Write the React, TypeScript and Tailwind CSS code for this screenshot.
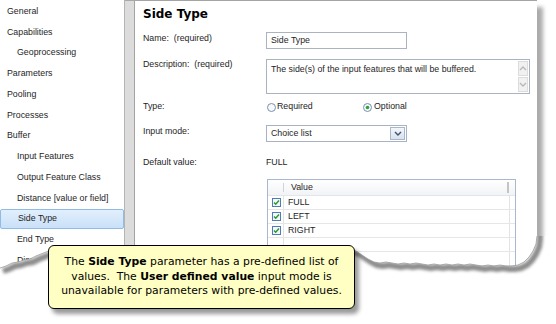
import React from 'react';

const navItems = [
  { label: 'General', sub: false },
  { label: 'Capabilities', sub: false },
  { label: 'Geoprocessing', sub: true },
  { label: 'Parameters', sub: false },
  { label: 'Pooling', sub: false },
  { label: 'Processes', sub: false },
  { label: 'Buffer', sub: false },
  { label: 'Input Features', sub: true },
  { label: 'Output Feature Class', sub: true },
  { label: 'Distance [value or field]', sub: true },
  { label: 'Side Type', sub: true, active: true },
  { label: 'End Type', sub: true },
  { label: 'Dissolve Type', sub: true },
];

const values = ['FULL', 'LEFT', 'RIGHT', '', ''];

const CheckBox = () => (
  <svg width="9" height="9" viewBox="0 0 9 9">
    <rect x="0.5" y="0.5" width="8" height="8" fill="#f3f7fc" stroke="#4f7cb8" />
    <path d="M2 4.4 L3.7 6.2 L7 2.5" fill="none" stroke="#2d9a2d" strokeWidth="1.5" />
  </svg>
);

const Radio = ({ on }: { on?: boolean }) => (
  <svg width="9" height="9" viewBox="0 0 9 9">
    <circle cx="4.5" cy="4.5" r="4" fill="#f7f9fb" stroke="#7890b0" />
    {on && <circle cx="4.5" cy="4.5" r="1.8" fill="#2ea33a" />}
  </svg>
);

const Chevron = ({ up, color }: { up?: boolean; color: string }) => (
  <svg width="8" height="5" viewBox="0 0 8 5">
    <path d={up ? 'M1 4 L4 1 L7 4' : 'M1 1 L4 4 L7 1'} fill="none" stroke={color} strokeWidth="1.4" />
  </svg>
);

// torn bottom edge of the screenshot
const edge =
  'M0,268 L6,266 L12,263 L18,262 L24,260 L30,259 L36,256 L41,254 L46,252 L52,250 L350,249 L356,251 L362,255 L368,259 L374,262 L380,263 L386,262 L392,263 L398,264 L404,263 L410,264 L416,263 L422,264 L428,265 L434,264 L440,265 L446,264 L452,265 L458,264 L464,265 L470,264 L476,265 L482,266 L488,265 L494,266 L500,265 L506,266 L512,266 L518,265 L524,262 L529,257 L533,251 L536,244 L537,236';

const TornEdge = () => (
  <svg className="absolute left-0 top-[230px]" width="556" height="94" viewBox="0 230 556 94">
    <defs>
      <clipPath id="below">
        <path d={edge + ' L556,236 L556,324 L0,324 Z'} />
      </clipPath>
      <filter id="soft" x="-10%" y="-50%" width="120%" height="200%">
        <feGaussianBlur stdDeviation="1.8" />
      </filter>
    </defs>
    <path d={edge + ' L556,236 L556,324 L0,324 Z'} fill="#ffffff" />
    <g clipPath="url(#below)">
      <path d={edge + ' L537,226'} transform="translate(3,3)" fill="none" stroke="#8c8c8c" strokeWidth="6" filter="url(#soft)" />
    </g>
    <path d={edge} fill="none" stroke="#9a9a9a" strokeWidth="0.8" />
  </svg>
);

export default function App() {
  return (
    <div className="relative w-[556px] h-[324px] overflow-hidden bg-white font-['Liberation_Sans',Arial,sans-serif] text-[8.8px] text-[#1e1e1e]">
      <div className="flex w-[537px] h-[272px] bg-white shadow-[6px_7px_4px_rgba(0,0,0,0.33)]">
        {/* sidebar */}
        <div className="w-[125px] shrink-0 border-r border-[#b4b4b4] pt-[1px]">
          {navItems.map((it) => (
            <div
              key={it.label}
              className={`flex h-[20.75px] items-center ${it.sub ? 'pl-[17px]' : 'pl-[7px]'} ${
                it.active ? 'bg-gradient-to-b from-[#e2effc] to-[#c9e0f8] border border-[#8fbbe6] rounded-[2px] pl-[16px]' : ''
              }`}
            >
              {it.label}
            </div>
          ))}
        </div>
        <div className="w-[9px] shrink-0 bg-[#dcdcdc] border-t border-[#a8a8a8]" />
        {/* content */}
        <div className="flex-1 border-l border-t border-[#a4a4a4] pl-[8px] pt-[4px]">
          <div className="h-[18px] leading-[18px] font-['DejaVu_Sans',sans-serif] font-bold text-[12px] text-black">Side Type</div>

          <div className="mt-[9px] flex">
            <div className="w-[123px] pt-[1px] leading-[11px]">Name:&nbsp; (required)</div>
            <div className="w-[141px] h-[17px] border border-[#aab4c0] flex items-center pl-[4px]">Side Type</div>
          </div>

          <div className="mt-[10px] flex">
            <div className="w-[123px] leading-[11px]">Description:&nbsp; (required)</div>
            <div className="w-[264px] h-[35px] border border-[#aab4c0] flex">
              <div className="flex-1 pl-[4px] pt-[4px] leading-[11px]">The side(s) of the input features that will be buffered.</div>
              <div className="w-[12px] flex flex-col gap-[1px] p-[1px]">
                <div className="flex-1 bg-[#f1f1f1] border border-[#dcdcdc] flex items-center justify-center">
                  <Chevron up color="#b9b9b9" />
                </div>
                <div className="flex-1 bg-[#f1f1f1] border border-[#dcdcdc] flex items-center justify-center">
                  <Chevron color="#b9b9b9" />
                </div>
              </div>
            </div>
          </div>

          <div className="mt-[5px] flex h-[16px] items-center">
            <div className="w-[124px]">Type:</div>
            <div className="w-[96px] flex items-center gap-[1px]">
              <Radio />
              <span>Required</span>
            </div>
            <div className="flex items-center gap-[2px]">
              <Radio on />
              <span>Optional</span>
            </div>
          </div>

          <div className="mt-[10px] flex">
            <div className="w-[123px] leading-[11px] pt-[1px]">Input mode:</div>
            <div className="w-[141px] h-[17px] border border-[#a7b3c4] flex">
              <div className="flex-1 flex items-center pl-[4px]">Choice list</div>
              <div className="w-[15px] m-[1px] bg-gradient-to-b from-[#f4f7fb] to-[#d9e2ee] border border-[#a9b7cb] flex items-center justify-center">
                <Chevron color="#3f5070" />
              </div>
            </div>
          </div>

          <div className="mt-[13px] flex h-[16px] items-center">
            <div className="w-[123px]">Default value:</div>
            <div>FULL</div>
          </div>

          <div className="mt-[8px] ml-[124px] w-[249px] border border-[#a9b8cc]">
            <div className="flex h-[16px] bg-gradient-to-b from-white to-[#f1f3f6] border-b border-[#e2e5ea]">
              <div className="w-[16px] flex items-center justify-end py-[3px]">
                <div className="w-px h-full bg-[#d0d4da]" />
              </div>
              <div className="flex-1 flex items-center pl-[7px]">Value</div>
              <div className="w-[8px] flex">
                <div className="w-[2px] my-[2px] bg-[#c4c4c4]" />
              </div>
            </div>
            {values.map((v, i) => (
              <div key={i} className="flex h-[14px] border-b border-[#e6e6e6]">
                <div className="w-[16px] border-r border-[#e3e3e3] flex items-center justify-center pl-[1px]">
                  {v && <CheckBox />}
                </div>
                <div className="flex-1 flex items-center pl-[4px]">{v}</div>
                <div className="w-[6px] border-l border-[#e3e3e3]" />
              </div>
            ))}
          </div>
        </div>
      </div>

      <TornEdge />

      {/* callout */}
      <div className="absolute left-[48px] top-[245px] w-[307px] h-[64px] rounded-[6px] border-[1.5px] border-black bg-[#ffffc3] shadow-[4px_5px_4px_rgba(0,0,0,0.4)] flex items-center justify-center text-center font-['DejaVu_Sans',sans-serif] text-[10.8px] leading-[14.5px] text-black">
        <p>
          The <b>Side Type</b> parameter has a pre-defined list of
          <br />
          values.&nbsp; The <b>User defined value</b> input mode is
          <br />
          unavailable for parameters with pre-defined values.
        </p>
      </div>
    </div>
  );
}
